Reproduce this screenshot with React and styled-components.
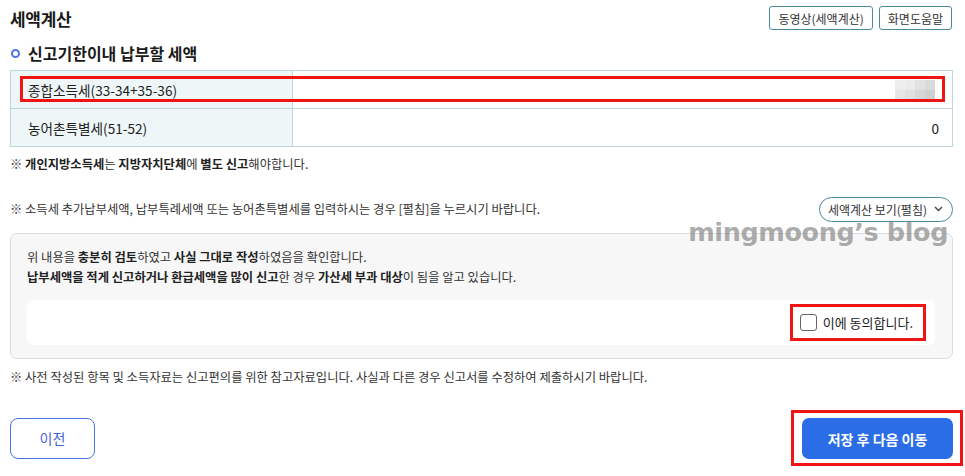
import React, { useState } from "react";
import styled, { createGlobalStyle } from "styled-components";

const Global = createGlobalStyle`
  body {
    margin: 0;
    background: #fff;
    font-family: "Noto Sans CJK KR", "Noto Sans", sans-serif;
    color: #222;
  }
`;

const Page = styled.div`
  width: 943px;
  padding: 0 12px 0 10px;
  display: flex;
  flex-direction: column;
`;

const Header = styled.div`
  height: 36px;
  display: flex;
  align-items: center;
  justify-content: space-between;
`;

const Title = styled.h1`
  margin: 0;
  font-size: 17px;
  font-weight: 700;
  color: #1a1a1a;
  letter-spacing: -0.3px;
`;

const HeadButtons = styled.div`
  display: flex;
  gap: 6px;
  padding-right: 1px;
`;

const SmallButton = styled.button`
  height: 24px;
  padding: 0 8px;
  border: 1px solid #4c8a9b;
  border-radius: 3px;
  background: #fff;
  font-family: inherit;
  font-size: 12px;
  color: #333;
`;

const SectionTitle = styled.h2`
  margin: 0;
  height: 34px;
  display: flex;
  align-items: center;
  gap: 8px;
  font-size: 16px;
  font-weight: 700;
  color: #1a1a1a;
  &::before {
    content: "";
    width: 5px;
    height: 5px;
    border: 2px solid #4b78e6;
    border-radius: 50%;
    margin-left: 1px;
  }
`;

const Table = styled.div`
  border: 1px solid #bfd6dc;
  display: flex;
  flex-direction: column;
`;

const Row = styled.div`
  position: relative;
  display: grid;
  grid-template-columns: 282px 1fr;
  height: 37px;
  & + & {
    border-top: 1px solid #bfd6dc;
  }
`;

const Label = styled.div`
  background: #eef6f8;
  border-right: 1px solid #bfd6dc;
  display: flex;
  align-items: center;
  padding-left: 17px;
  font-size: 13.6px;
  color: #222;
`;

const Value = styled.div`
  display: flex;
  align-items: center;
  justify-content: flex-end;
  padding-right: 13px;
  font-size: 13.6px;
  color: #222;
`;

const Highlight = styled.div`
  position: absolute;
  left: 9px;
  right: 7px;
  top: 5px;
  bottom: 6px;
  border: 3px solid #f01414;
  pointer-events: none;
`;

const Blur = styled.div`
  width: 40px;
  height: 20px;
  display: grid;
  grid-template-columns: repeat(4, 1fr);
  grid-template-rows: repeat(2, 1fr);
  margin-right: 4px;
  span:nth-child(1) { background: #eeeeee; }
  span:nth-child(2) { background: #ebebeb; }
  span:nth-child(3) { background: #e2e2e2; }
  span:nth-child(4) { background: #dadada; }
  span:nth-child(5) { background: #e6e6e6; }
  span:nth-child(6) { background: #dfdfdf; }
  span:nth-child(7) { background: #d6d6d6; }
  span:nth-child(8) { background: #cfcfcf; }
`;

const Note = styled.p`
  margin: ${(p) => p.$mt || 0}px 0 0;
  font-size: 12.3px;
  color: #333;
  line-height: 16px;
  b {
    font-weight: 700;
    color: #222;
  }
`;

const NoteRow = styled.div`
  margin-top: 24px;
  height: 26px;
  display: flex;
  align-items: center;
  justify-content: space-between;
  position: relative;
`;

const PillButton = styled.button`
  height: 25px;
  padding: 0 9px 0 8px;
  display: flex;
  align-items: center;
  gap: 7px;
  border: 1px solid #4c8a9b;
  border-radius: 13px;
  background: #fff;
  font-family: inherit;
  font-size: 12px;
  color: #333;
`;

const Watermark = styled.div`
  position: absolute;
  right: 5px;
  top: 21px;
  font-family: "DejaVu Sans", sans-serif;
  font-size: 25.5px;
  font-weight: 700;
  letter-spacing: -0.4px;
  color: rgba(140, 140, 140, 0.72);
  pointer-events: none;
  z-index: 2;
`;

const AgreeBox = styled.div`
  margin-top: 11px;
  background: #f7f7f7;
  border: 1px solid #dcdcdc;
  border-radius: 7px;
  padding: 13px 17px 13px 16px;
  display: flex;
  flex-direction: column;
`;

const AgreeText = styled.p`
  margin: 0;
  font-size: 12.3px;
  line-height: 20px;
  color: #333;
  b {
    font-weight: 700;
    color: #222;
  }
`;

const AgreeInner = styled.div`
  margin-top: 13px;
  height: 45px;
  background: #fff;
  border-radius: 6px;
  display: flex;
  align-items: center;
  justify-content: flex-end;
  padding-right: 9px;
`;

const CheckMark = styled.label`
  border: 3px solid #f01414;
  height: 31px;
  display: flex;
  align-items: center;
  gap: 6px;
  padding: 0 10px 0 7px;
  font-size: 13px;
  color: #222;
  cursor: pointer;
`;

const Box = styled.span`
  width: 15px;
  height: 15px;
  border: 1px solid #666;
  border-radius: 3px;
  background: ${(p) => (p.$on ? "#2a6de6" : "#fff")};
`;

const Footer = styled.div`
  margin-top: 25px;
  display: flex;
  align-items: center;
  justify-content: space-between;
`;

const PrevButton = styled.button`
  width: 85px;
  height: 41px;
  border: 1px solid #4a73e2;
  border-radius: 8px;
  background: #fff;
  color: #3f63d8;
  font-family: inherit;
  font-size: 14px;
`;

const NextFrame = styled.div`
  border: 3px solid #f01414;
  padding: 5px 7px 4px 8px;
  margin-right: -10px;
`;

const NextButton = styled.button`
  width: 151px;
  height: 41px;
  border: none;
  border-radius: 7px;
  background: #2a6de6;
  color: #fff;
  font-family: inherit;
  font-size: 14px;
  font-weight: 700;
`;

export default function App() {
  const [agree, setAgree] = useState(false);
  return (
    <Page>
      <Global />
      <Header>
        <Title>세액계산</Title>
        <HeadButtons>
          <SmallButton>동영상(세액계산)</SmallButton>
          <SmallButton>화면도움말</SmallButton>
        </HeadButtons>
      </Header>
      <SectionTitle>신고기한이내 납부할 세액</SectionTitle>
      <Table>
        <Row>
          <Label>종합소득세(33-34+35-36)</Label>
          <Value>
            <Blur>
              {Array.from({ length: 8 }).map((_, i) => (
                <span key={i} />
              ))}
            </Blur>
          </Value>
          <Highlight />
        </Row>
        <Row>
          <Label>농어촌특별세(51-52)</Label>
          <Value>0</Value>
        </Row>
      </Table>
      <Note $mt={9}>
        ※ <b>개인지방소득세</b>는 <b>지방자치단체</b>에 <b>별도 신고</b>해야합니다.
      </Note>
      <NoteRow>
        <Note>
          ※ 소득세 추가납부세액, 납부특례세액 또는 농어촌특별세를 입력하시는 경우 [펼침]을 누르시기 바랍니다.
        </Note>
        <PillButton>
          세액계산 보기(펼침)
          <svg width="9" height="6" viewBox="0 0 9 6">
            <path d="M1 1l3.5 3.5L8 1" fill="none" stroke="#444" strokeWidth="1.4" />
          </svg>
        </PillButton>
        <Watermark>mingmoong’s blog</Watermark>
      </NoteRow>
      <AgreeBox>
        <AgreeText>
          위 내용을 <b>충분히 검토</b>하였고 <b>사실 그대로 작성</b>하였음을 확인합니다.
          <br />
          <b>납부세액을 적게 신고하거나 환급세액을 많이 신고</b>한 경우 <b>가산세 부과 대상</b>이 됨을 알고 있습니다.
        </AgreeText>
        <AgreeInner>
          <CheckMark onClick={() => setAgree(!agree)}>
            <Box $on={agree} />
            이에 동의합니다.
          </CheckMark>
        </AgreeInner>
      </AgreeBox>
      <Note $mt={10}>
        ※ 사전 작성된 항목 및 소득자료는 신고편의를 위한 참고자료입니다. 사실과 다른 경우 신고서를 수정하여 제출하시기 바랍니다.
      </Note>
      <Footer>
        <PrevButton>이전</PrevButton>
        <NextFrame>
          <NextButton>저장 후 다음 이동</NextButton>
        </NextFrame>
      </Footer>
    </Page>
  );
}
